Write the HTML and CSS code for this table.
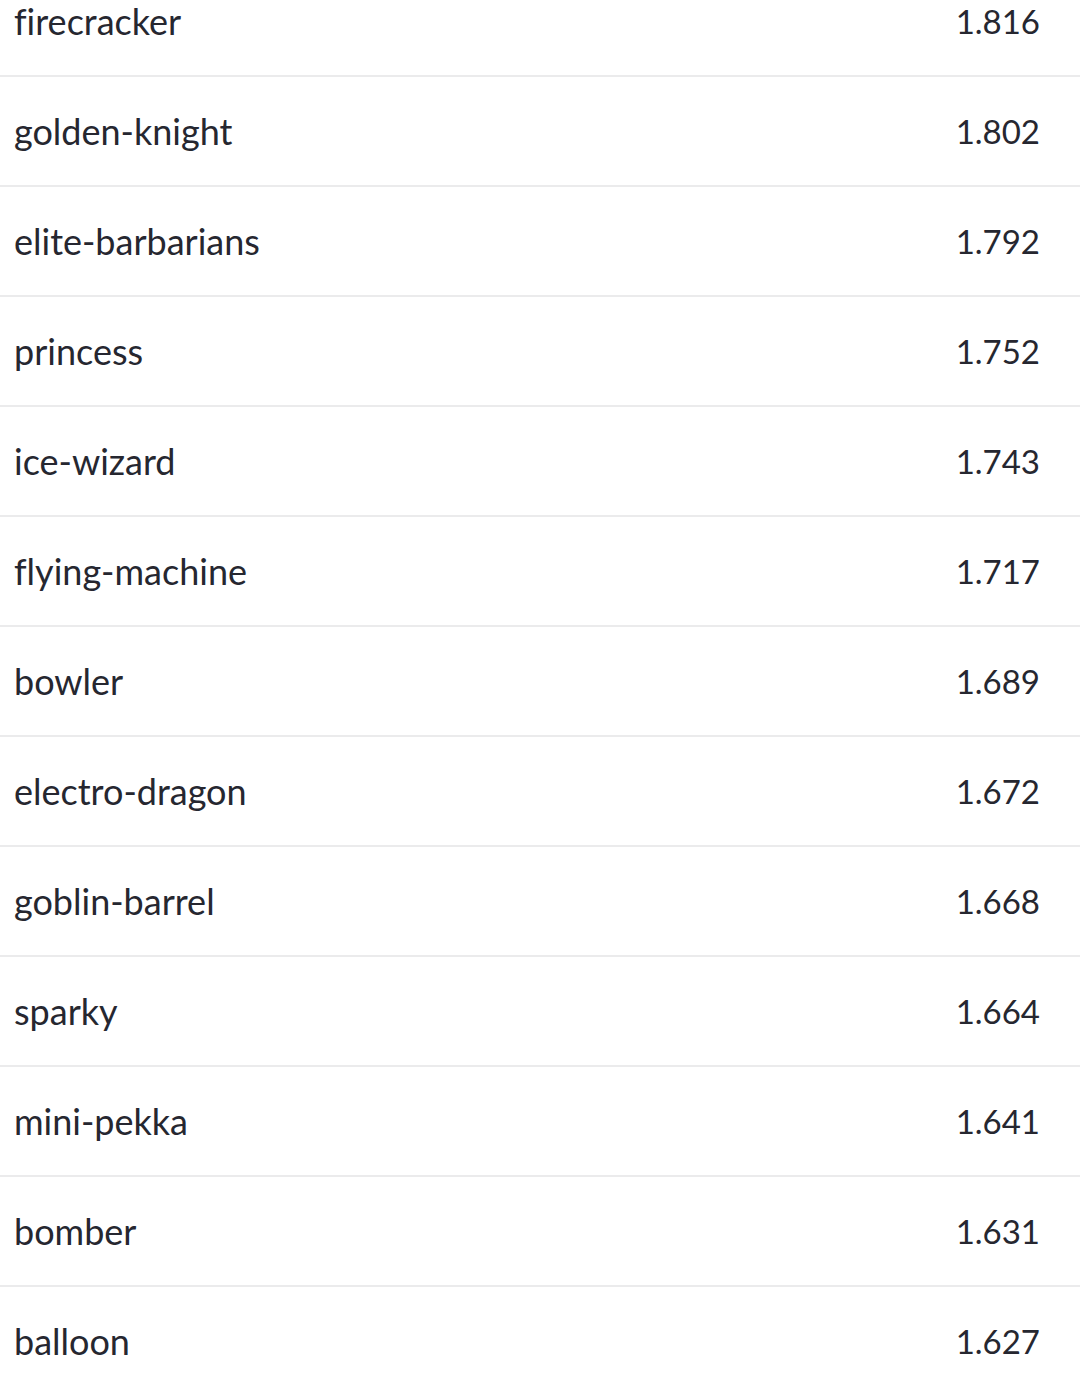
FILE: index.html
```html
<!DOCTYPE html>
<html>
<head>
<meta charset="utf-8">
<link rel="stylesheet" href="styles.css">
</head>
<body>
<div class="table">
  <div class="row"><span class="name">firecracker</span><span class="val">1.816</span></div>
  <div class="row"><span class="name">golden-knight</span><span class="val">1.802</span></div>
  <div class="row"><span class="name">elite-barbarians</span><span class="val">1.792</span></div>
  <div class="row"><span class="name">princess</span><span class="val">1.752</span></div>
  <div class="row"><span class="name">ice-wizard</span><span class="val">1.743</span></div>
  <div class="row"><span class="name">flying-machine</span><span class="val">1.717</span></div>
  <div class="row"><span class="name">bowler</span><span class="val">1.689</span></div>
  <div class="row"><span class="name">electro-dragon</span><span class="val">1.672</span></div>
  <div class="row"><span class="name">goblin-barrel</span><span class="val">1.668</span></div>
  <div class="row"><span class="name">sparky</span><span class="val">1.664</span></div>
  <div class="row"><span class="name">mini-pekka</span><span class="val">1.641</span></div>
  <div class="row"><span class="name">bomber</span><span class="val">1.631</span></div>
  <div class="row last"><span class="name">balloon</span><span class="val">1.627</span></div>
</div>
</body>
</html>
```
FILE: styles.css
```css
html, body {
  margin: 0;
  padding: 0;
  background: #ffffff;
  overflow: hidden;
}
.table {
  margin-top: -33px;
  font-family: "Lato", "Open Sans", sans-serif;
  font-variant-ligatures: none;
  color: #262730;
}
.row {
  height: 108px;
  border-bottom: 2px solid #ebebec;
  display: flex;
  align-items: center;
  justify-content: space-between;
  padding: 0 40px 0 14px;
}
.row.last {
  border-bottom: none;
}
.name {
  font-size: 36px;
  line-height: 1;
}
.val {
  font-size: 33px;
  line-height: 1;
}
```
